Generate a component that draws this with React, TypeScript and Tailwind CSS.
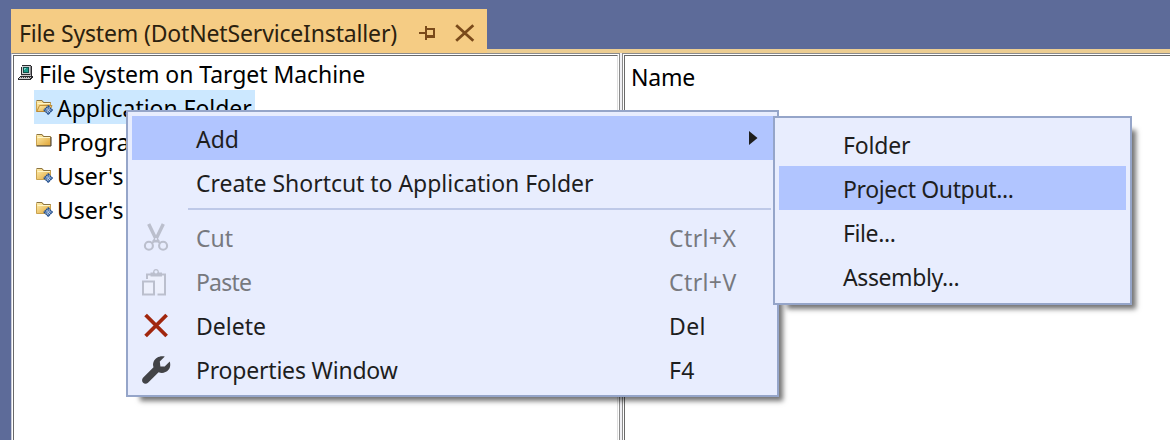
import React from 'react';

function ComputerIcon() {
  return (
    <svg width="16" height="16" viewBox="0 0 16 16" shapeRendering="crispEdges">
      <path d="M4 0H13V1H14V10H12V11H3V2H4Z" fill="#2a2a2e" />
      <path d="M4 1H12V9H4Z" fill="#cfcfd2" />
      <path d="M12 1H13V10H12Z" fill="#8a8a8e" />
      <path d="M5 2H11V8H5Z" fill="#0f4f4a" />
      <path d="M6 3H10V7H6Z" fill="#1a9a8a" />
      <path d="M6 3H8V4H7V5H6Z" fill="#7fd8cc" />
      <path d="M3 10H14V11H15V13H14V14H13V15H0V13H1V12H2V11H3Z" fill="#2a2a2e" />
      <path d="M3 10H13V11H3ZM2 12H13V13H2ZM1 13H12V14H1Z" fill="#c9c9cc" />
      <path d="M3 12H4V13H3ZM5 12H6V13H5ZM7 12H8V13H7ZM9 12H10V13H9ZM11 12H12V13H11Z" fill="#3a3a3e" />
    </svg>
  );
}

function FolderIcon({ open = false, special = false }: { open?: boolean; special?: boolean }) {
  return (
    <svg width="17" height="16" viewBox="0 0 17 16">
      <defs>
        <linearGradient id="folderFill" x1="0" y1="0" x2="1" y2="1">
          <stop offset="0" stopColor="#fff0b0" />
          <stop offset="1" stopColor="#e0a436" />
        </linearGradient>
      </defs>
      <path d="M.5 12.5V2.5L1.5 1.5H6L7.5 3.5H14.5V12.5Z" fill="url(#folderFill)" stroke="#c9a250" />
      <path d="M.5 1.5H6L7.5 3.5H14.5" fill="none" stroke="#8c7440" />
      <path d="M1.5 4.5H14" stroke="#fff6c8" />
      {open && <path d="M3.6 6.5H16L13.5 12.5H.8Z" fill="url(#folderFill)" stroke="#b98733" strokeWidth=".9" />}
      {!special && <path d="M.5 13H15V4" fill="none" stroke="#3c3428" />}
      {special && (
        <g>
          <path d="M12.2 7.1L16.2 11.1L12.2 15.1L8.2 11.1Z" fill="#dbe8f8" stroke="#24508f" strokeWidth="1.5" strokeDasharray="1.8 .4" />
          <path d="M12.2 8.6V13.6M9.7 11.1H14.7" stroke="#2f5fa4" strokeWidth="1.2" />
          <path d="M11.5 10.4H12.9V11.8H11.5Z" fill="#fff" />
        </g>
      )}
    </svg>
  );
}

function CutIcon() {
  return (
    <svg width="28" height="30" viewBox="0 0 28 30" fill="none" stroke="#bbbfcd">
      <path d="M6.7 1L14.2 16.5M21.3 1L13.8 16.5" strokeWidth="3.4" />
      <path d="M10.5 17.5L14 13L17.5 17.5V19.5H10.5Z" fill="#bbbfcd" stroke="none" />
      <circle cx="14" cy="16" r="1" fill="#e8edfe" stroke="none" />
      <circle cx="6.9" cy="22.7" r="4" strokeWidth="2.1" />
      <circle cx="21.1" cy="22.7" r="4" strokeWidth="2.1" />
      <path d="M10 20.5L12 18M18 20.5L16 18" strokeWidth="2" />
    </svg>
  );
}

function PasteIcon() {
  return (
    <svg width="28" height="30" viewBox="0 0 28 30" fill="none" stroke="#bbbfcd" strokeWidth="2">
      <path d="M5 12V7.5H23V27.5H15.5" fill="#edf0fc" />
      <path d="M8.5 9.5V5.5H11C11 .9 17 .9 17 5.5H20V9.5Z" fill="#bbbfcd" stroke="none" />
      <circle cx="14" cy="4.8" r="1.6" fill="#e8edfe" stroke="none" />
      <path d="M1 14.5H12V27.5H1Z" fill="#edf0fc" />
    </svg>
  );
}

function DeleteIcon() {
  return (
    <svg width="28" height="30" viewBox="0 0 28 30" fill="none" stroke="#a1260d" strokeWidth="3.8">
      <path d="M3.6 4L24.6 25M24.6 4L3.6 25" />
    </svg>
  );
}

function WrenchIcon() {
  return (
    <svg width="30" height="30" viewBox="0 0 30 30" fill="#424347">
      <path d="M22.8 1.6C18.5.2 13.4 2.3 11.6 6.8C10.8 8.8 10.9 10.5 11.5 12.2L1 22.7C-.4 24.3-.1 26.6 1.1 27.8C2.5 29.1 4.7 29 6 27.7L16.6 17.2C19.6 18.6 23.9 18 26.5 14.8C28.4 12.6 28.7 9.3 27.7 6.6L22.7 11.4H18.4L17.8 6.6Z" />
    </svg>
  );
}

function TreeRow({ icon, label, className = '' }: { icon: React.ReactNode; label: string; className?: string }) {
  return (
    <div className={`flex h-[34px] w-fit items-center whitespace-pre pr-[3px] tracking-[-0.05px] ${className}`}>
      {icon}
      <span className="pt-px">{label}</span>
    </div>
  );
}

type ItemProps = {
  label: string;
  icon?: React.ReactNode;
  shortcut?: string;
  active?: boolean;
  disabled?: boolean;
  arrow?: boolean;
  tracking?: string;
};

function MenuItem({ label, icon, shortcut, active, disabled, arrow, tracking = '' }: ItemProps) {
  const offset = shortcut ? 'pb-0' : 'pt-[2px]';
  return (
    <div
      className={`flex h-11 items-center whitespace-pre ${active ? 'bg-[#b1c5ff]' : ''} ${disabled ? 'text-[#77797f]' : 'text-[#1e1e1e]'}`}
    >
      <div className="flex w-16 shrink-0 pl-2.5">{icon}</div>
      <span className={`flex-1 ${offset} ${tracking}`}>{label}</span>
      {shortcut && <span className={`w-[104px] tracking-[0.4px] ${offset}`}>{shortcut}</span>}
      {arrow && (
        <svg width="9" height="14" viewBox="0 0 9 14" className="mr-[15px]">
          <path d="M0 0L8.5 7L0 14Z" fill="#1e1e1e" />
        </svg>
      )}
    </div>
  );
}

const menuFrame =
  "absolute border-2 border-[#95a5c9] bg-[#e8edfe] shadow-[9px_9px_5px_-5px_rgba(0,0,0,0.55)]";

export default function App() {
  return (
    <div className="relative flex h-[440px] w-[1170px] flex-col overflow-hidden bg-[#5d6b99] pl-[11px] pt-[9px] font-['Noto_Sans',sans-serif] text-[23px] leading-[32px] text-black">
      <div className="flex h-10 w-[476px] shrink-0 items-center bg-[#f5cc84] pl-2 text-[#2b210f]">
        <span className="w-[399px] whitespace-pre pt-[7px] tracking-[-0.16px]">File System (DotNetServiceInstaller)</span>
        <svg width="18" height="16" viewBox="0 0 18 16" className="mt-[8px]" fill="none" stroke="#7a4a1a" strokeWidth="2">
          <path d="M1 8H7M8 1V15M8 4H16V11" />
          <path d="M8 11.5H17" strokeWidth="3" />
        </svg>
        <svg width="20" height="18" viewBox="0 0 20 18" className="ml-[19px] mt-[8px]" fill="none" stroke="#7a4a1a" strokeWidth="2.8">
          <path d="M1.2 1.2L18.3 16.8M18.3 1.2L1.2 16.8" />
        </svg>
      </div>
      <div className="flex h-1 shrink-0">
        <div className="w-[476px] bg-[#f5cc84]" />
        <div className="flex-1 bg-[#eccd92]" />
      </div>
      <div className="flex min-h-0 flex-1 bg-[#f0f0f4]">
        <div className="w-[609px] border-l border-r border-t border-[#8b8b8b] border-l-[#c9cbd4] bg-white pl-px pr-px pt-px">
          <div className="h-full border-l border-r border-t border-[#696969] border-r-[#dedede] pl-[4px]">
            <TreeRow label="File System on Target Machine" icon={<span className="mr-[5px] flex w-4"><ComputerIcon /></span>} />
            <div className="pl-4">
              <TreeRow className="bg-[#cce8ff] pl-0.5" label="Application Folder" icon={<span className="mr-1 flex w-[17px]"><FolderIcon open special /></span>} />
              <TreeRow className="pl-0.5" label="Progra" icon={<span className="mr-1 flex w-[17px]"><FolderIcon /></span>} />
              <TreeRow className="pl-0.5" label="User's" icon={<span className="mr-1 flex w-[17px]"><FolderIcon special /></span>} />
              <TreeRow className="pl-0.5" label="User's" icon={<span className="mr-1 flex w-[17px]"><FolderIcon special /></span>} />
            </div>
          </div>
        </div>
        <div className="ml-0.5 flex-1 border-l border-t border-[#8b8b8b] bg-white pl-px pt-px">
          <div className="h-full border-l border-t border-[#696969] pl-1.5 pt-[5px] tracking-[-0.2px]">Name</div>
        </div>
      </div>

      <div className={`${menuFrame} left-[126px] top-[110px] h-[287px] w-[653px] px-1 pt-1`}>
        <MenuItem label="Add" active arrow />
        <MenuItem label="Create Shortcut to Application Folder" tracking="tracking-[-0.03px]" />
        <div className="ml-14 mr-0.5 h-3 pt-1">
          <div className="h-0.5 bg-[#bec9e8]" />
        </div>
        <MenuItem label="Cut" shortcut="Ctrl+X" disabled icon={<CutIcon />} />
        <MenuItem label="Paste" shortcut="Ctrl+V" disabled icon={<PasteIcon />} tracking="tracking-[-0.8px]" />
        <MenuItem label="Delete" shortcut="Del" icon={<DeleteIcon />} />
        <MenuItem label="Properties Window" shortcut="F4" icon={<WrenchIcon />} tracking="tracking-[-0.2px]" />
      </div>

      <div className={`${menuFrame} left-[773px] top-[116px] h-[189px] w-[359px] p-1`}>
        <MenuItem label="Folder" tracking="tracking-[-0.2px]" />
        <MenuItem label="Project Output..." active tracking="tracking-[-0.36px]" />
        <MenuItem label="File..." tracking="tracking-[-0.4px]" />
        <MenuItem label="Assembly..." tracking="tracking-[-0.4px]" />
      </div>
    </div>
  );
}
